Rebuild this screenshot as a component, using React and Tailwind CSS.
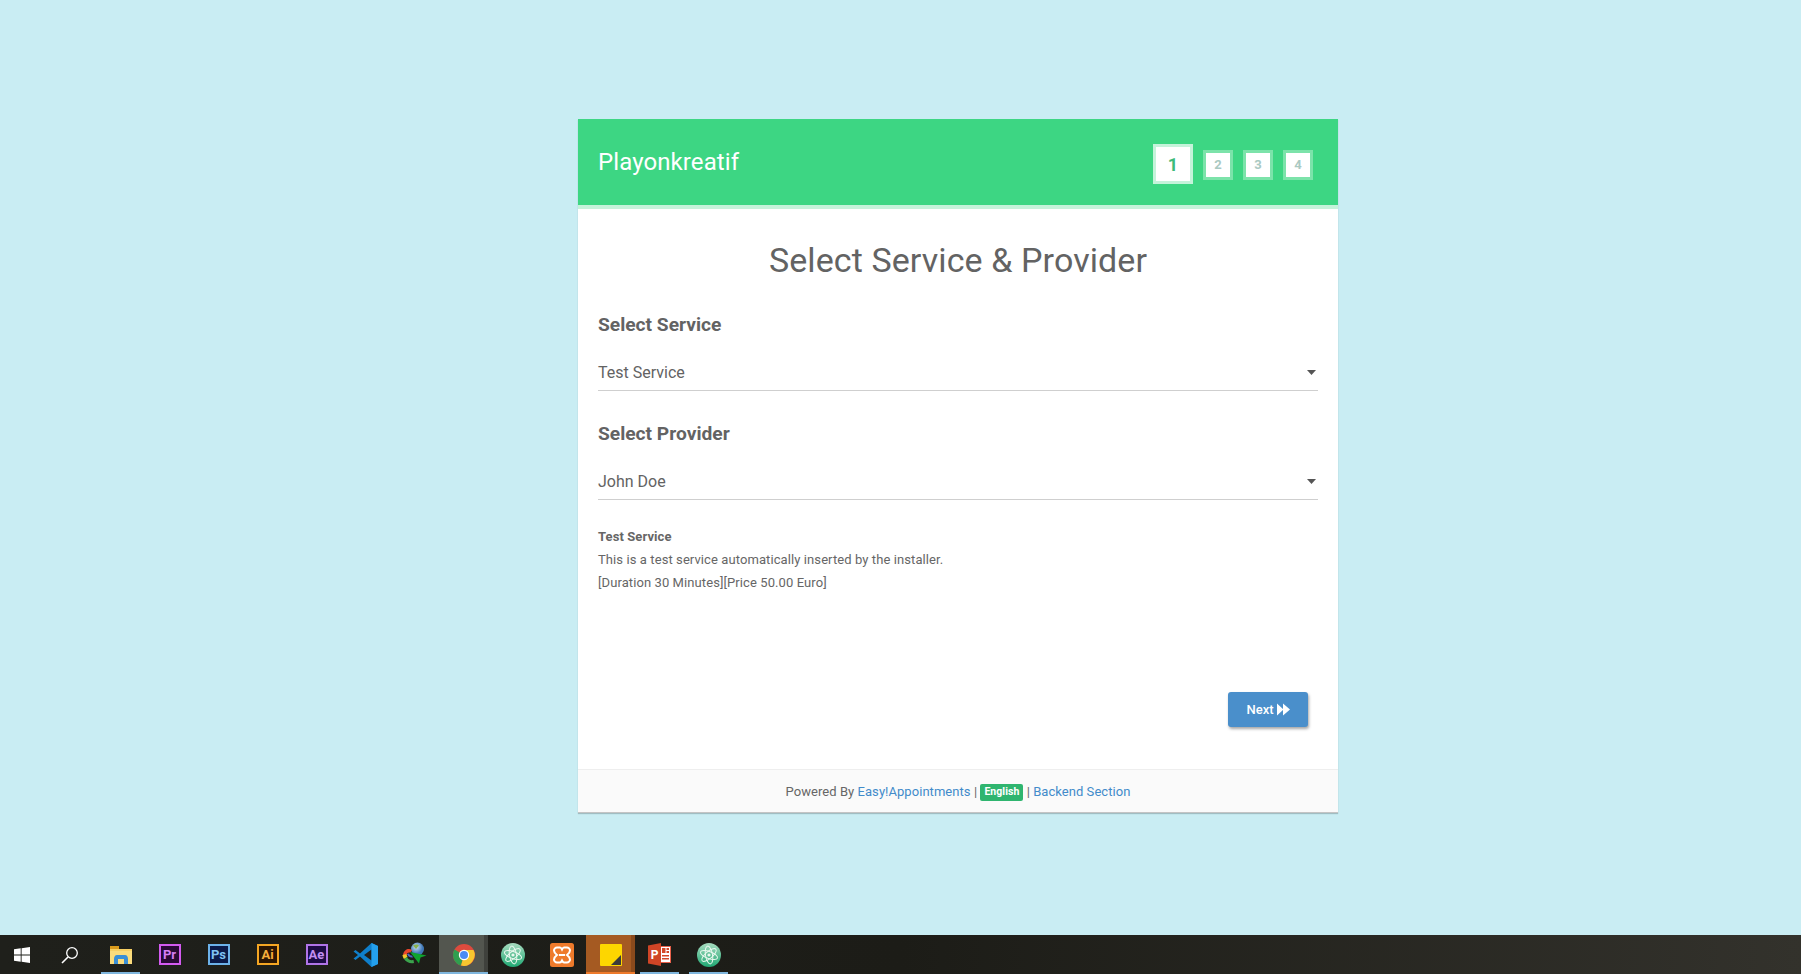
import React from "react";

const F = { fontFamily: "Roboto, 'Liberation Sans', sans-serif" };

function Step({ n, active }) {
  return active ? (
    <div className="w-[40px] h-[40px] bg-white border-[3px] border-[#c5f3da] flex items-center justify-center text-[18px] font-bold text-[#3dbb7a]">{n}</div>
  ) : (
    <div className="mt-[1px] w-[30px] h-[30px] bg-white border-[3px] border-[#7ce3aa] flex items-center justify-center text-[13px] font-bold text-[#aac9c2]">{n}</div>
  );
}

function Picker({ label, value }) {
  return (
    <div>
      <h3 className="text-[19.2px] leading-[22px] font-bold text-[#636363]">{label}</h3>
      <div className="mt-[17px] h-[38px] pt-[2px] border-b border-[#cfcfcf] flex items-center justify-between text-[16px] text-[#636363] pr-[2px]">
        <span>{value}</span>
        <svg width="9" height="5" viewBox="0 0 9 5"><path d="M0 0h9L4.5 5z" fill="#555" /></svg>
      </div>
    </div>
  );
}

function AdobeIcon({ t, border, bg, color }) {
  return (
    <div className="w-[22px] h-[21px] border-2 flex items-center justify-center text-[13px] font-bold leading-none" style={{ borderColor: border, background: bg, color }}>{t}</div>
  );
}

const Windows = () => (
  <svg width="16" height="16" viewBox="0 0 16 16"><path d="M0 2.3 6.7 1.3V7.5H0zM7.6 1.2 16 0V7.5H7.6zM0 8.4H6.7V14.7L0 13.7zM7.6 8.4H16V16L7.600 14.800z" fill="#fff" /></svg>
);
const Search = () => (
  <svg width="18" height="18" viewBox="0 0 18 18" fill="none" stroke="#fff" strokeWidth="1.3"><circle cx="11" cy="7" r="5.3" /><path d="M7 11 1 17" strokeWidth="1.6" /></svg>
);
const Folder = () => (
  <svg width="22" height="18" viewBox="0 0 22 18"><path d="M0 0h9v3H0z" fill="#d99a1c" /><path d="M0 3h22v15H0z" fill="#f7cf63" /><path d="M0 5h22v13H0z" fill="#fbdc7c" /><path d="M4 13c0-2 1-4 3-4h8c2 0 3 2 3 4v5h-4v-5H8v5H4z" fill="#3a8fd6" /></svg>
);
const VSCode = () => (
  <svg width="26" height="26" viewBox="0 0 26 26"><path d="M18.500 1 25 4v18l-6.500 3L7 14.500 2.500 18 .5 16.500 5 13 .5 9.500 2.500 8 7 11.500z" fill="#0f7fcb" /><path d="M18.500 7.500 11 13l7.500 5.500z" fill="#1f1f1a" /><path d="M18.500 1 25 4v18l-6.500 3z" fill="#24a0ed" /></svg>
);
const IDM = () => (
  <svg width="25" height="25" viewBox="0 0 25 25">
    <defs><radialGradient id="g" cx=".4" cy=".35"><stop offset="0" stopColor="#cfe2f5" /><stop offset="1" stopColor="#3f78b8" /></radialGradient></defs>
    <circle cx="15.500" cy="7" r="6.500" fill="url(#g)" />
    <path d="M11 3.500c2-1.500 5-1.500 6 0l-3 3.500z" fill="#8ab04e" />
    <path d="M1 13C2 7 7 6 10 8l-1.500 2.500C6 10 4.500 11 4.500 14z" fill="#e8452c" />
    <path d="M.5 13c0 1 .5 2.500 1.500 4l3.500-2c-.5-1-1-2-1-3z" fill="#f0c62c" />
    <path d="M2 17c2 3 6 5 10 4l-.5-3c-2.500.5-5 0-6.500-3z" fill="#3ba34d" />
    <path d="M5 12c.5 2 3 4 6 3.500l-1-2c-1.500 0-2.500-.5-3-2z" fill="#4d63c9" />
    <path d="M8 10l16.500 3.500-6 2-1.500 6z" fill="#0fa32f" />
  </svg>
);
const Chrome = () => (
  <svg width="22" height="22" viewBox="0 0 22 22">
    <circle cx="11" cy="11" r="11" fill="#dd4b3e" />
    <path d="M11 11 1.500 5.500A11 11 0 0 0 8 21.600z" fill="#2f9e4f" />
    <path d="M11 6h9.500A11 11 0 0 1 8 21.600L11 11z" fill="#f7c62f" />
    <circle cx="11" cy="11" r="5.200" fill="#fff" /><circle cx="11" cy="11" r="4" fill="#4a8af4" />
  </svg>
);
const Atom = ({ id }) => (
  <svg width="24" height="24" viewBox="0 0 24 24">
    <defs><linearGradient id={id} x1="0" y1="0" x2="0" y2="1"><stop offset="0" stopColor="#a8dcc0" /><stop offset="1" stopColor="#1fa873" /></linearGradient></defs>
    <circle cx="12" cy="12" r="12" fill={`url(#${id})`} />
    <g fill="none" stroke="#eaf8ef" strokeWidth="1">
      <ellipse cx="12" cy="12" rx="9" ry="3.500" transform="rotate(20 12 12)" />
      <ellipse cx="12" cy="12" rx="9" ry="3.500" transform="rotate(80 12 12)" />
      <ellipse cx="12" cy="12" rx="9" ry="3.500" transform="rotate(140 12 12)" />
    </g>
    <circle cx="12" cy="12" r="1.600" fill="#eaf8ef" />
  </svg>
);
const Xampp = () => (
  <svg width="24" height="24" viewBox="0 0 24 24">
    <rect width="24" height="24" rx="2.500" fill="#ee7a2b" />
    <path d="M7 4.500h3c1 0 1.500 1 2 2 .5-1 1-2 2-2h3c1.500 0 3 1.500 3 3 0 2-1 3-3 4.500 2 1.500 3 2.500 3 4.500 0 1.500-1.500 3-3 3h-3c-1 0-1.500-1-2-2-.5 1-1 2-2 2H7c-1.500 0-3-1.500-3-3 0-2 1-3 3-4.500C5 10.500 4 9.500 4 7.500c0-1.500 1.500-3 3-3z" fill="none" stroke="#fff" strokeWidth="2" />
    <path d="M9 11h6v2H9z" fill="#fff" />
  </svg>
);
const Sticky = () => (
  <svg width="22" height="22" viewBox="0 0 22 22"><path d="M1 0h20a1 1 0 0 1 1 1v20a1 1 0 0 1-1 1H1a1 1 0 0 1-1-1V1a1 1 0 0 1 1-1z" fill="#fdd600" /><path d="M21 11v10H11z" fill="#3b3b3b" /></svg>
);
const Ppt = () => (
  <svg width="23" height="23" viewBox="0 0 23 23">
    <path d="M12 3h11v17H12z" fill="#e8604a" />
    <path d="M13 4h9v15h-9z" fill="#fff" />
    <path d="M14 5h3.500v5H14zM18.500 5H21v2h-2.500zM18.500 8H21v2h-2.500zM14 12h7v1.500h-7zM14 15h7v1.500h-7z" fill="#d24726" />
    <path d="M0 2.500 13 0v23L0 20.500z" fill="#cf4526" />
    <text x="6.500" y="16" textAnchor="middle" fontSize="12" fontWeight="700" fill="#fff" fontFamily="Roboto, sans-serif">P</text>
  </svg>
);

function Tb({ children, w = "w-[49px]", under, bg = "", edge = "", bottom = "" }) {
  return (
    <div className={`relative h-full flex items-center justify-center shrink-0 ${w} ${bg}`}>
      {children}
      {edge && <div className={`absolute top-0 bottom-0 right-0 w-[4px] ${edge}`} />}
      {under && <div className="absolute bottom-0 left-[5px] right-[5px] h-[2px] bg-[#7fb6dd]" />}
      {bottom && <div className={`absolute bottom-0 left-0 right-0 h-[2px] ${bottom}`} />}
    </div>
  );
}

export default function App() {
  return (
    <div className="h-[974px] flex flex-col bg-[#c9edf3] overflow-hidden" style={F}>
      <main className="flex-1 pt-[119px]">
        <div className="w-[760px] ml-[578px] bg-white shadow-[0_1px_1px_rgba(0,0,0,0.2)]">
          <header className="h-[90px] bg-[#3dd683] border-b-[4px] border-[#c5f3da] flex justify-between pl-[20px] pr-[25px]">
            <div className="pt-[29px] text-[24px] leading-[28px] tracking-[0.1px] text-white">Playonkreatif</div>
            <div className="flex items-center gap-[10px] pt-[4px]">
              <Step n="1" active />
              <Step n="2" />
              <Step n="3" />
              <Step n="4" />
            </div>
          </header>
          <section className="h-[560px] px-[20px] pt-[33px] flex flex-col">
            <h2 className="text-center text-[34px] leading-[37px] tracking-[0.1px] text-[#636363]">Select Service &amp; Provider</h2>
            <div className="mt-[35px] flex flex-col gap-[32px]">
              <Picker label="Select Service" value="Test Service" />
              <Picker label="Select Provider" value="John Doe" />
            </div>
            <div className="mt-[25px] text-[13px] leading-[23px] tracking-[0.09px] text-[#666]">
              <div className="font-bold">Test Service</div>
              <div>This is a test service automatically inserted by the installer.</div>
              <div>[Duration 30 Minutes][Price 50.00 Euro]</div>
            </div>
            <div className="flex-1" />
            <div className="flex justify-end pr-[10px] pb-[42px]">
              <button className="w-[80px] h-[35px] rounded-[3px] bg-[#4a8fcb] text-white text-[13px] font-medium flex items-center justify-center gap-[3px] shadow-[1px_2px_3px_rgba(0,0,0,0.35)]">
                Next
                <svg width="13" height="13" viewBox="0 0 13 13"><path d="M0 0.500 6.500 6.500 0 12.500zM6 0.500 13 6.500 6 12.500z" fill="#fff" /></svg>
              </button>
            </div>
          </section>
          <footer className="h-[44px] pt-[2px] bg-[#fafafa] border-t border-[#eeeeee] border-b border-b-[#c4c4c4] flex items-center justify-center text-[13px] tracking-[0.05px] text-[#666]">
            <span>Powered By&nbsp;</span>
            <a className="text-[#428bca]">Easy!Appointments</a>
            <span>&nbsp;|&nbsp;</span>
            <span className="inline-flex items-center h-[17px] px-[4px] rounded-[2px] bg-[#2fb56f] text-white text-[10.5px] font-bold">English</span>
            <span>&nbsp;|&nbsp;</span>
            <a className="text-[#428bca]">Backend Section</a>
          </footer>
        </div>
      </main>
      <div className="h-[39px] bg-gradient-to-r from-[#1f201b] via-[#1c1c17] to-[#33322c] flex items-center">
        <Tb w="w-[44px]"><Windows /></Tb>
        <Tb w="w-[52px]"><Search /></Tb>
        <Tb under><Folder /></Tb>
        <Tb><AdobeIcon t="Pr" border="#d35bf0" bg="#2a0a36" color="#d77ef5" /></Tb>
        <Tb><AdobeIcon t="Ps" border="#6cb2ea" bg="#0b1a4a" color="#7fc1f2" /></Tb>
        <Tb><AdobeIcon t="Ai" border="#f5a623" bg="#2b1603" color="#f6ae3b" /></Tb>
        <Tb><AdobeIcon t="Ae" border="#b074e8" bg="#1d0b45" color="#c18ef0" /></Tb>
        <Tb><VSCode /></Tb>
        <Tb><IDM /></Tb>
        <Tb bg="bg-[#53564f]" edge="bg-[#3f413c]" bottom="bg-[#7fb6dd]"><Chrome /></Tb>
        <Tb><Atom id="atomA" /></Tb>
        <Tb><Xampp /></Tb>
        <Tb bg="bg-[#a55a22]" edge="bg-[#8a4a1c]" bottom="bg-[#ee7a2b]"><Sticky /></Tb>
        <Tb under><Ppt /></Tb>
        <Tb under><Atom id="atomB" /></Tb>
      </div>
    </div>
  );
}
